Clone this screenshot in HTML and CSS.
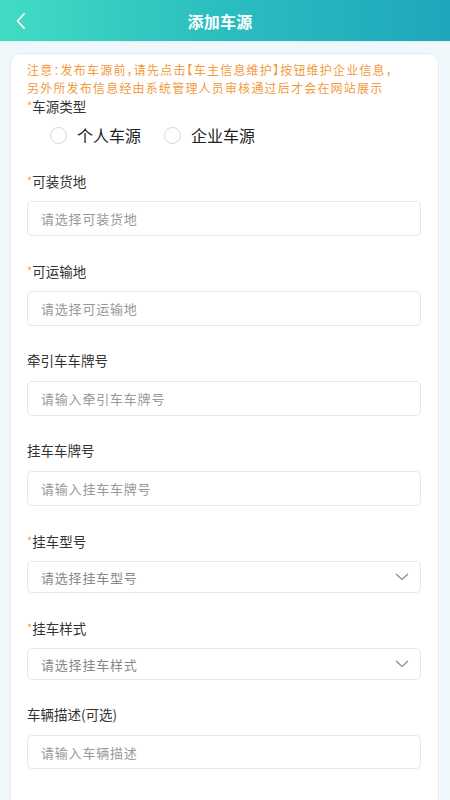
FILE: index.html
```html
<!DOCTYPE html>
<html lang="zh">
<head>
<meta charset="utf-8">
<title>添加车源</title>
<link rel="stylesheet" href="styles.css">
</head>
<body>
<header class="topbar">
  <span class="back"><svg width="12" height="18" viewBox="0 0 12 18"><path d="M9 2 L2.5 9 L9 16" fill="none" stroke="#fff" stroke-width="1.8" stroke-linecap="round" stroke-linejoin="round"/></svg></span>
  <h1 class="title">添加车源</h1>
</header>
<main class="page">
  <section class="card">
    <p class="notice"><span class="line">注意：发布车源前，请先点击【车主信息维护】按钮维护企业信息，</span><span class="line">另外所发布信息经由系统管理人员审核通过后才会在网站展示</span></p>
    <div class="label first"><span class="req">*</span>车源类型</div>
    <div class="radios">
      <label class="radio"><span class="dot"></span>个人车源</label>
      <label class="radio"><span class="dot"></span>企业车源</label>
    </div>

    <div class="field">
      <div class="label"><span class="req">*</span>可装货地</div>
      <div class="input">请选择可装货地</div>
    </div>
    <div class="field">
      <div class="label"><span class="req">*</span>可运输地</div>
      <div class="input">请选择可运输地</div>
    </div>
    <div class="field">
      <div class="label">牵引车车牌号</div>
      <div class="input">请输入牵引车车牌号</div>
    </div>
    <div class="field">
      <div class="label">挂车车牌号</div>
      <div class="input">请输入挂车车牌号</div>
    </div>
    <div class="field">
      <div class="label"><span class="req">*</span>挂车型号</div>
      <div class="input select">请选择挂车型号<svg class="chev" width="14" height="8" viewBox="0 0 14 8"><path d="M1 1 L7 6.5 L13 1" fill="none" stroke="#8a8a8a" stroke-width="1.2"/></svg></div>
    </div>
    <div class="field">
      <div class="label"><span class="req">*</span>挂车样式</div>
      <div class="input select">请选择挂车样式<svg class="chev" width="14" height="8" viewBox="0 0 14 8"><path d="M1 1 L7 6.5 L13 1" fill="none" stroke="#8a8a8a" stroke-width="1.2"/></svg></div>
    </div>
    <div class="field">
      <div class="label">车辆描述(可选)</div>
      <div class="input tall">请输入车辆描述</div>
    </div>
  </section>
</main>
</body>
</html>
```
FILE: styles.css
```css
* { box-sizing: border-box; }
html, body { margin: 0; padding: 0; }
body {
  width: 450px;
  min-height: 800px;
  background: #f1f8fb;
  font-family: "Noto Sans CJK SC", "Noto Sans", sans-serif;
  color: #333;
}
.topbar {
  height: 41px;
  background: linear-gradient(90deg, #42dcc4 0%, #2cc0c0 45%, #1ea7bb 100%);
  display: flex;
  align-items: center;
  justify-content: center;
  position: relative;
  box-shadow: 0 1px 2px rgba(0,0,0,0.06);
}
.back {
  position: absolute;
  left: 15px;
  top: 12px;
  display: flex;
}
.title {
  margin: 0 10px 0 0;
  color: #fff;
  font-size: 16px;
  font-weight: 700;
  letter-spacing: 0.3px;
}
.page {
  padding: 12px 11px 0 10px;
}
.card {
  background: #fff;
  border: 1px solid #e3ecef;
  border-radius: 11px;
  padding: 7px 17px 40px 16px;
  min-height: 760px;
}
.notice {
  margin: 0;
  color: #f39a3c;
  font-size: 12px;
  line-height: 17.5px;
  letter-spacing: 1.2px;
  font-feature-settings: "halt";
  white-space: nowrap;
}
.notice .line { display: block; }
.label {
  font-size: 13.5px;
  line-height: 20px;
  height: 20px;
  color: #333;
  margin-bottom: 11px;
}
.label.first { margin-top: -1px; margin-bottom: 6px; }
.req {
  color: #f39a3c;
  font-size: 11px;
  vertical-align: 2px;
}
.radios {
  display: flex;
  align-items: center;
  gap: 23px;
  height: 28px;
  padding-left: 23px;
  margin-bottom: 21px;
}
.radio {
  display: flex;
  align-items: center;
  font-size: 16px;
  color: #222;
  gap: 10px;
}
.dot {
  width: 17px;
  height: 17px;
  border-radius: 50%;
  border: 1px solid #d6d6d6;
  background: #fff;
}
.field { margin-bottom: 24px; }
.input {
  height: 35px;
  border: 1px solid #e6e6e6;
  border-radius: 5px;
  display: flex;
  align-items: center;
  padding: 0 13px;
  font-size: 13px;
  letter-spacing: 0.8px;
  color: #999;
}
.input.select {
  height: 32px;
  justify-content: space-between;
  color: #888;
}
.input.tall { height: 34px; }
.chev { margin-right: -2px; }
```
